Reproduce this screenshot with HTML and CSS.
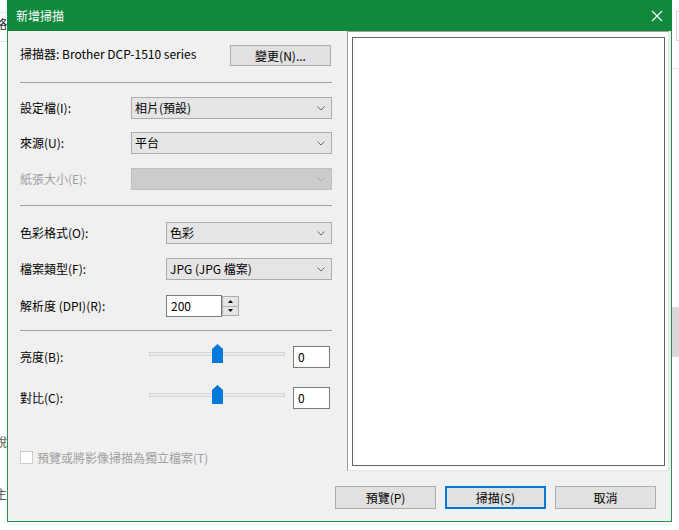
FILE: index.html
```html
<!DOCTYPE html>
<html lang="zh-Hant">
<head>
<meta charset="utf-8">
<title>新增掃描</title>
<link rel="stylesheet" href="styles.css">
</head>
<body>
<div class="backdrop">
  <div class="bg-left">
    <div class="bg-left-inner">
      <div class="bg-line bg-line-1"></div>
      <div class="bg-text bg-text-1">略</div>
      <div class="bg-line bg-line-2"></div>
      <div class="bg-text bg-text-2">說</div>
      <div class="bg-text bg-text-3">主</div>
    </div>
  </div>
  <div class="bg-right">
    <div class="bg-box"></div>
    <div class="bg-hline"></div>
    <div class="bg-block"></div>
  </div>
</div>

<div class="dialog">
  <div class="titlebar">
    <span class="title">新增掃描</span>
    <svg class="close" width="12" height="12" viewBox="0 0 12 12"><path d="M1 1L11 11M11 1L1 11" stroke="#fff" stroke-width="1.1" fill="none"/></svg>
  </div>
  <div class="content">
    <div class="main">
      <div class="form">
        <div class="row row-scanner">
          <span class="label label-scanner">掃描器: Brother DCP-1510 series</span>
          <div class="btn btn-change">變更(N)...</div>
        </div>
        <div class="sep sep-1"></div>

        <div class="row row-profile">
          <span class="label label-a">設定檔(I):</span>
          <div class="select select-a"><span class="sel-text">相片(預設)</span><svg class="chev" width="8" height="5" viewBox="0 0 8 5"><path d="M0.5 0.5L4 4L7.5 0.5" stroke="#6a6a6a" fill="none"/></svg></div>
        </div>
        <div class="row row-source">
          <span class="label label-a">來源(U):</span>
          <div class="select select-a"><span class="sel-text">平台</span><svg class="chev" width="8" height="5" viewBox="0 0 8 5"><path d="M0.5 0.5L4 4L7.5 0.5" stroke="#6a6a6a" fill="none"/></svg></div>
        </div>
        <div class="row row-paper">
          <span class="label label-a disabled">紙張大小(E):</span>
          <div class="select select-a select-disabled"><span class="sel-text"></span><svg class="chev" width="8" height="5" viewBox="0 0 8 5"><path d="M0.5 0.5L4 4L7.5 0.5" stroke="#a8a8a8" fill="none"/></svg></div>
        </div>
        <div class="sep sep-2"></div>

        <div class="row row-color">
          <span class="label label-b">色彩格式(O):</span>
          <div class="select select-b"><span class="sel-text">色彩</span><svg class="chev" width="8" height="5" viewBox="0 0 8 5"><path d="M0.5 0.5L4 4L7.5 0.5" stroke="#6a6a6a" fill="none"/></svg></div>
        </div>
        <div class="row row-type">
          <span class="label label-b">檔案類型(F):</span>
          <div class="select select-b"><span class="sel-text">JPG (JPG 檔案)</span><svg class="chev" width="8" height="5" viewBox="0 0 8 5"><path d="M0.5 0.5L4 4L7.5 0.5" stroke="#6a6a6a" fill="none"/></svg></div>
        </div>
        <div class="row row-dpi">
          <span class="label label-b">解析度 (DPI)(R):</span>
          <div class="spin">
            <div class="spin-input">200</div>
            <div class="spin-btns">
              <div class="spin-btn"><svg width="5" height="3" viewBox="0 0 5 3"><path d="M2.5 0L5 3H0Z" fill="#000"/></svg></div>
              <div class="spin-btn"><svg width="5" height="3" viewBox="0 0 5 3"><path d="M0 0H5L2.5 3Z" fill="#000"/></svg></div>
            </div>
          </div>
        </div>
        <div class="sep sep-3"></div>

        <div class="row row-bright">
          <span class="label label-c">亮度(B):</span>
          <div class="slider">
            <div class="track"></div>
            <svg class="thumb" width="11" height="19" viewBox="0 0 11 19"><path d="M0 5L5.5 0L11 5V19H0Z" fill="#0078d7"/></svg>
          </div>
          <div class="valbox">0</div>
        </div>
        <div class="row row-contrast">
          <span class="label label-c">對比(C):</span>
          <div class="slider">
            <div class="track"></div>
            <svg class="thumb" width="11" height="19" viewBox="0 0 11 19"><path d="M0 5L5.5 0L11 5V19H0Z" fill="#0078d7"/></svg>
          </div>
          <div class="valbox">0</div>
        </div>

        <div class="check-row">
          <span class="checkbox"></span>
          <span class="check-label">預覽或將影像掃描為獨立檔案(T)</span>
        </div>
      </div>
      <div class="preview">
        <div class="frame"></div>
      </div>
    </div>
    <div class="buttons">
      <div class="btn btn-foot">預覽(P)</div>
      <div class="btn btn-foot btn-default">掃描(S)</div>
      <div class="btn btn-foot">取消</div>
    </div>
  </div>
</div>
</body>
</html>
```

FILE: styles.css
```css
* { box-sizing: border-box; }
html, body { margin: 0; padding: 0; }
body {
  width: 679px;
  height: 530px;
  overflow: hidden;
  position: relative;
  background: #ffffff;
  font-family: "Noto Sans CJK TC", "Noto Sans", sans-serif;
  font-size: 12px;
  line-height: 16px;
  color: #000;
}

/* desktop behind the dialog */
.backdrop {
  display: flex;
  justify-content: space-between;
  height: 530px;
}
.bg-left { width: 7px; overflow: hidden; }
.bg-left-inner { width: 40px; margin-left: -33px; }
.bg-line { height: 1px; background: #e2e2e2; }
.bg-line-1 { margin-top: 12px; }
.bg-text { text-align: right; color: #222; font-size: 12px; line-height: 14px; }
.bg-text-1 { margin-top: 4px; }
.bg-line-2 { margin-top: 10px; }
.bg-text-2 { margin-top: 393px; color: #555; }
.bg-text-3 { margin-top: 38px; color: #555; }

.bg-right { width: 7px; }
.bg-box {
  margin-top: 11px;
  margin-left: 4px;
  height: 30px;
  border: 1px solid #d4d4d4;
  border-right: none;
}
.bg-hline { margin-top: 27px; height: 1px; background: #e6e6e6; }
.bg-block { margin-top: 238px; height: 50px; background: #d9d9d9; }

/* dialog window */
.dialog {
  position: absolute;
  left: 7px;
  top: 0;
  width: 665px;
  height: 522px;
  display: flex;
  flex-direction: column;
  background: #f0f0f0;
  border: 1px solid #2a8d50;
  border-top: none;
}
.titlebar {
  height: 31px;
  flex: none;
  background: #10893e;
  display: flex;
  align-items: center;
  margin: 0 -1px;
  padding-left: 9px;
  padding-right: 9px;
}
.title { color: #fff; font-size: 12px; line-height: 16px; }
.close { margin-left: auto; }

.content { flex: 1; display: flex; flex-direction: column; }
.main { display: flex; height: 440px; padding-left: 12px; }
.form { width: 312px; display: flex; flex-direction: column; padding-top: 14px; }

.row { display: flex; align-items: center; height: 22px; }
.label { white-space: nowrap; flex: none; }
.label-scanner { margin-bottom: 3px; }
.label-a { width: 111px; }
.label-b { width: 146px; }
.label-c { width: 129px; }
.disabled { color: #a0a0a0; }

.row-scanner { height: 21px; }
.btn {
  display: flex;
  align-items: center;
  justify-content: center;
  background: #e1e1e1;
  border: 1px solid #adadad;
  white-space: nowrap;
}
.btn-change { width: 101px; height: 21px; margin-left: auto; margin-right: 1px; }

.sep { height: 1px; background: #a0a0a0; }
.sep-1 { margin-top: 16px; }
.row-profile { margin-top: 14px; }
.row-source { margin-top: 13px; }
.row-paper { margin-top: 14px; }
.sep-2 { margin-top: 15px; }
.row-color { margin-top: 16px; }
.row-type { margin-top: 14px; }
.row-dpi { margin-top: 15px; }
.sep-3 { margin-top: 13px; }
.row-bright { margin-top: 15px; }
.row-contrast { margin-top: 19px; }

.select {
  height: 22px;
  display: flex;
  align-items: center;
  background: #e5e5e5;
  border: 1px solid #acacac;
  padding-left: 3px;
}
.select-a { width: 201px; }
.select-b { width: 166px; }
.select-disabled { background: #cccccc; border-color: #bfbfbf; }
.sel-text { flex: 1; white-space: nowrap; }
.chev { margin-right: 6px; flex: none; }

.spin { display: flex; height: 22px; }
.spin-input {
  width: 56px;
  height: 22px;
  background: #fff;
  border: 1px solid #7a7a7a;
  padding-left: 4px;
  display: flex;
  align-items: center;
}
.spin-btns {
  width: 17px;
  height: 22px;
  display: flex;
  flex-direction: column;
  justify-content: center;
  padding: 1px 0;
}
.spin-btn {
  flex: 1;
  background: #e5e5e5;
  border: 1px solid #acacac;
  display: flex;
  align-items: center;
  justify-content: center;
}
.spin-btn + .spin-btn { border-top: none; }

.slider { position: relative; width: 136px; height: 22px; }
.track {
  margin-top: 6px;
  height: 4px;
  background: #e7eaea;
  border: 1px solid #d6d6d6;
}
.thumb { position: absolute; left: 63px; top: -2px; }
.valbox {
  width: 37px;
  height: 22px;
  margin-left: 8px;
  background: #fff;
  border: 1px solid #7a7a7a;
  padding-left: 4px;
  display: flex;
  align-items: center;
}

.check-row { display: flex; align-items: center; margin-top: 42px; height: 13px; }
.checkbox {
  width: 13px;
  height: 13px;
  border: 1px solid #cccccc;
  background: #fff;
  flex: none;
}
.check-label { margin-left: 4px; color: #a0a0a0; white-space: nowrap; }

.preview {
  margin-left: 15px;
  width: 322px;
  height: 440px;
  background: #fff;
  border-left: 1px solid #a0a0a0;
  border-top: 1px solid #a0a0a0;
  border-right: 1px solid #e3e3e3;
  border-bottom: 1px solid #e3e3e3;
  padding: 5px 3px 4px 4px;
}
.frame { height: 100%; border: 1px solid #646464; background: #fff; }

.buttons {
  display: flex;
  justify-content: flex-end;
  gap: 9px;
  padding: 15px 15px 12px;
}
.btn-foot { width: 101px; height: 23px; }
.btn-default { border: 2px solid #0078d7; }
```
